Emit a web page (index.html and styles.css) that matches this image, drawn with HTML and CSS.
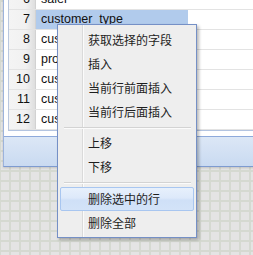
FILE: index.html
```html
<!DOCTYPE html>
<html>
<head>
<meta charset="utf-8">
<link rel="stylesheet" href="styles.css">
</head>
<body>
<div class="panel">
  <div class="table-wrap">
    <div class="table">
      <div class="row"><div class="num">6</div><div class="name">saler</div></div>
      <div class="row"><div class="num">7</div><div class="name sel">customer_type</div></div>
      <div class="row"><div class="num">8</div><div class="name">customer_name</div></div>
      <div class="row"><div class="num">9</div><div class="name">product_name</div></div>
      <div class="row"><div class="num">10</div><div class="name">customer_id</div></div>
      <div class="row"><div class="num">11</div><div class="name">customer_addr</div></div>
      <div class="row"><div class="num">12</div><div class="name">customer_tel</div></div>
    </div>
  </div>
  <div class="gap"></div>
  <div class="toolbar"></div>
</div>
<div class="menu">
  <div class="item">获取选择的字段</div>
  <div class="item">插入</div>
  <div class="item">当前行前面插入</div>
  <div class="item">当前行后面插入</div>
  <div class="sep sep1"></div>
  <div class="item">上移</div>
  <div class="item">下移</div>
  <div class="sep sep2"></div>
  <div class="item hover">删除选中的行</div>
  <div class="item">删除全部</div>
</div>
</body>
</html>
```
FILE: styles.css
```css
html, body {
  margin: 0;
  padding: 0;
}
body {
  width: 253px;
  height: 255px;
  overflow: hidden;
  position: relative;
  background-color: #e4e4e4;
  background-image:
    linear-gradient(to right, #d5d9d1 2px, transparent 2px),
    linear-gradient(to bottom, #d5d9d1 2px, transparent 2px);
  background-size: 10px 10px, 10px 10px;
  background-position: 9px 0, 0 0;
  font-family: "Liberation Sans", Arial, sans-serif;
}
.panel {
  margin-top: -10px;
  margin-left: 3px;
  width: 290px;
  background: #fff;
  border-left: 1px solid #9cb3dc;
  border-bottom: 1px solid #7e9bd0;
  box-shadow: 0 1px 2px rgba(0, 0, 0, 0.15);
}
.table-wrap {
  padding-left: 4px;
}
.table {
  border-left: 1px solid #b9c7de;
  border-bottom: 1px solid #b3c4e0;
}
.row {
  display: flex;
  height: 19px;
  border-bottom: 1px solid #e3e3e3;
  font-size: 12.5px;
  line-height: 19px;
  color: #111;
}
.num {
  width: 21px;
  padding-right: 5px;
  text-align: right;
  background: linear-gradient(to right, #f4f4f4 0, #f1f1f1 65%, #dedede 100%);
  border-right: 1px solid #d2d2d2;
}
.name {
  width: 147px;
  padding-left: 5px;
  white-space: nowrap;
  overflow: hidden;
}
.name.sel {
  background: #b1cbec;
}
.gap {
  height: 5px;
}
.toolbar {
  height: 29px;
  border-top: 1px solid #8eaadb;
  background: linear-gradient(to bottom, #dce7f6 0, #c9daf1 100%);
}
.menu {
  position: absolute;
  left: 57px;
  top: 24px;
  width: 138px;
  padding: 3px 0 2px;
  border: 1px solid #7590c6;
  background-color: #eeeeee;
  background-image: linear-gradient(to right, transparent 24px, #dadada 24px, #dadada 25px, #fbfbfb 25px, #fbfbfb 26px, transparent 26px);
  box-shadow: 2px 2px 3px rgba(0, 0, 0, 0.28);
  font-family: "Noto Sans CJK SC", "Noto Sans", sans-serif;
  font-size: 12px;
  color: #1e1e1e;
}
.item {
  height: 22px;
  line-height: 22px;
  margin: 0 2px;
  padding-left: 27px;
  border: 1px solid transparent;
  border-radius: 2px;
}
.item.hover {
  border-color: #a8c6f0;
  background: linear-gradient(to bottom, #e7f0fc 0, #dde9fa 45%, #cfe0f7 55%, #d3e3f8 100%);
}
.sep {
  margin: 0 5px 0 6px;
  border-top: 1px solid #d3d3d3;
  border-bottom: 1px solid #fbfbfb;
}
.sep1 {
  margin-top: 3px;
  margin-bottom: 2px;
}
.sep2 {
  margin-top: 3px;
  margin-bottom: 3px;
}
```
